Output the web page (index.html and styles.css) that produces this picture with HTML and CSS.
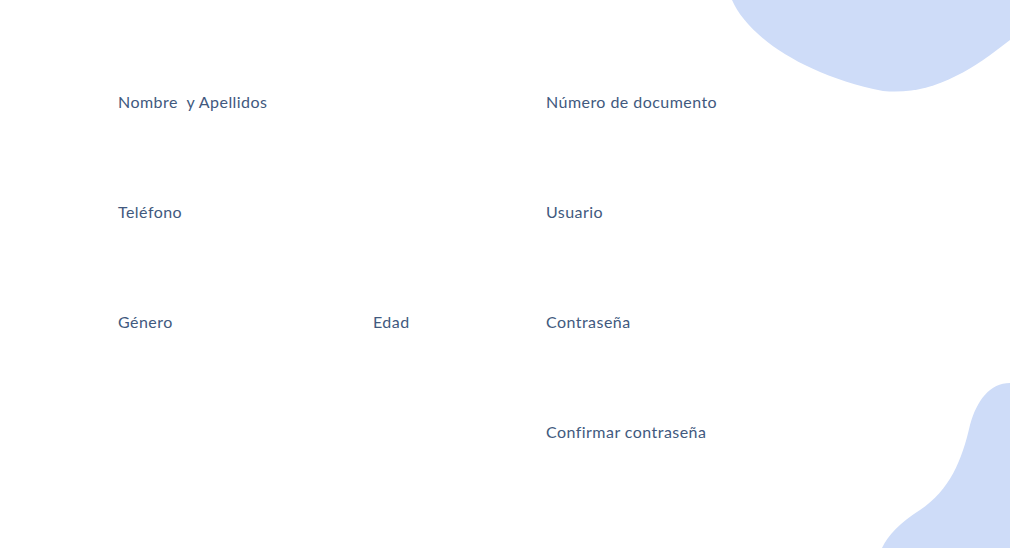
FILE: index.html
```html
<!DOCTYPE html>
<html>

<head>
    <meta charset="utf-8" />
    <title>Registro</title>
    <meta name="viewport" content="width=device-width, initial-scale=1">
    <link rel="stylesheet" href="styles.css">
</head>

<body>
    <div class="page">
        <svg class="blob blob-top" viewBox="0 0 278 92" width="278" height="92">
            <path d="M0 0 C 15 35, 70 75, 151 91 C 200 96, 240 70, 278 40 V0 Z" />
        </svg>
        <svg class="blob blob-bottom" viewBox="0 0 130 168" width="130" height="168">
            <path d="M130 3 C 110 3, 97 20, 90 45 C 82 80, 70 110, 40 130 C 20 143, 8 155, 2 168 L 130 168 Z" />
        </svg>

        <form class="form">
            <div class="field wide">
                <label>Nombre&nbsp; y Apellidos</label>
            </div>
            <div class="field">
                <label>Número de documento</label>
            </div>

            <div class="field wide">
                <label>Teléfono</label>
            </div>
            <div class="field">
                <label>Usuario</label>
            </div>

            <div class="field">
                <label>Género</label>
            </div>
            <div class="field">
                <label>Edad</label>
            </div>
            <div class="field">
                <label>Contraseña</label>
            </div>

            <div class="field wide"></div>
            <div class="field">
                <label>Confirmar contraseña</label>
            </div>
        </form>
    </div>
</body>

</html>
```

FILE: styles.css
```css
/* base */

body {
    margin: 0;
    background: #fff;
    font-family: "Lato", "Noto Sans", sans-serif;
    color: #41597e;
}

.page {
    position: relative;
    width: 1010px;
    height: 548px;
    overflow: hidden;
}

/* decoration */

.blob {
    position: absolute;
    display: block;
}

.blob path {
    fill: #cedcf8;
}

.blob-top {
    left: 732px;
    top: 0;
}

.blob-bottom {
    left: 880px;
    top: 380px;
}

/* form */

.form {
    display: grid;
    grid-template-columns: 255px 173px 1fr;
    grid-auto-rows: 110px;
    padding: 92px 0 0 118px;
}

.field {
    font-size: 16px;
    line-height: 20px;
}

.field.wide {
    grid-column: span 2;
}

.field label {
    letter-spacing: 0.45px;
    font-variant-ligatures: none;
}
```
